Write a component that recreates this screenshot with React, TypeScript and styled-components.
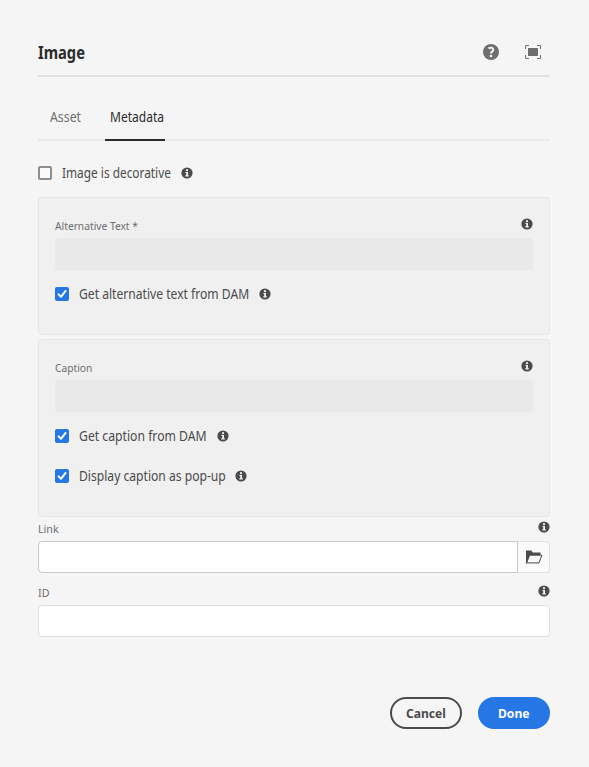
import React from 'react';
import styled, { createGlobalStyle } from 'styled-components';

const GlobalStyle = createGlobalStyle`
  * { box-sizing: border-box; }
  body { margin: 0; background: #f5f5f5; }
`;

const Dialog = styled.main`
  width: 589px;
  height: 767px;
  padding: 28px 39px 0 38px;
  background: #f5f5f5;
  color: #4b4b4b;
  font-family: 'Noto Sans', 'Open Sans', sans-serif;
  font-size: 14px;
  display: flex;
  flex-direction: column;
`;

const Header = styled.header`
  display: flex;
  align-items: center;
  height: 49px;
  padding-top: 1px;
  border-bottom: 2px solid #e1e1e1;
`;

const Title = styled.h1`
  margin: 0 auto 0 0;
  padding-top: 1px;
  font-size: 17px;
  line-height: 24px;
  font-weight: 700;
  color: #2c2c2c;
`;

const HeaderButton = styled.button`
  display: flex;
  margin: 0 9px 0 17px;
  padding: 0;
  border: 0;
  background: none;
  color: #6e6e6e;
`;

const Tabs = styled.nav`
  display: flex;
  gap: 22px;
  height: 48px;
  margin-top: 16px;
  padding-left: 7px;
  border-bottom: 2px solid #eaeaea;
`;

const Tab = styled.button<{ $selected?: boolean }>`
  height: 48px;
  padding: 0 1px 0 5px;
  border: 0;
  border-bottom: 2px solid ${(p) => (p.$selected ? '#2c2c2c' : 'transparent')};
  background: none;
  color: ${(p) => (p.$selected ? '#2c2c2c' : '#6e6e6e')};
  font: inherit;
  line-height: 47px;
`;

/* Squeezes a run of text horizontally and occupies exactly the given width. */
const Run = styled.span<{ $width: number; $scale?: number }>`
  display: block;
  width: ${(p) => p.$width}px;
  white-space: nowrap;
  text-align: left;
  transform: scaleX(${(p) => p.$scale ?? 0.865});
  transform-origin: 0 50%;
`;

const CheckRow = styled.label<{ $top: number }>`
  display: flex;
  align-items: center;
  height: 20px;
  margin-top: ${(p) => p.$top}px;
  line-height: 18px;
`;

const Box = styled.span<{ $checked?: boolean }>`
  display: flex;
  width: 14px;
  height: 14px;
  margin-right: 10px;
  border: ${(p) => (p.$checked ? '0' : '2px solid #8e8e8e')};
  border-radius: 2px;
  background: ${(p) => (p.$checked ? '#2676e5' : '#fafafa')};
`;

const InfoSvg = styled.svg`
  display: block;
  flex: none;
  width: 12px;
  height: 12px;
  color: #4b4b4b;
`;

const CheckInfo = styled.span`
  margin-left: 10px;
`;

const Panel = styled.section<{ $height: number; $top: number }>`
  height: ${(p) => p.$height}px;
  margin-top: ${(p) => p.$top}px;
  padding: 20px 16px 0;
  border: 1px solid #e6e6e6;
  border-radius: 4px;
  background: #f0f0f0;
`;

const FieldHead = styled.div<{ $top?: number }>`
  display: flex;
  justify-content: space-between;
  height: 20px;
  margin-top: ${(p) => p.$top ?? 0}px;
  color: #6e6e6e;
  font-size: 11.5px;
  line-height: 15px;
`;

const DisabledField = styled.div`
  height: 32px;
  border-radius: 4px;
  background: #e9e9e9;
`;

const PathField = styled.div`
  display: flex;
  height: 32px;
`;

const TextInput = styled.input<{ $joined?: boolean }>`
  display: block;
  flex: 1;
  width: 100%;
  height: 32px;
  border: 1px solid ${(p) => (p.$joined ? '#c8c8c8' : '#e1e1e1')};
  border-radius: ${(p) => (p.$joined ? '4px 0 0 4px' : '4px')};
  background: #fff;
  outline: none;
`;

const Browse = styled.button`
  display: flex;
  align-items: center;
  justify-content: center;
  width: 32px;
  padding: 0;
  border: 1px solid #e1e1e1;
  border-left: 0;
  border-radius: 0 4px 4px 0;
  background: #fafafa;
`;

const Footer = styled.footer`
  display: flex;
  justify-content: flex-end;
  gap: 16px;
  margin-top: 60px;
`;

const Action = styled.button<{ $primary?: boolean }>`
  display: flex;
  align-items: center;
  justify-content: center;
  width: 72px;
  height: 32px;
  padding: 0;
  border: 2px solid ${(p) => (p.$primary ? '#2676e5' : '#4b4b4b')};
  border-radius: 16px;
  background: ${(p) => (p.$primary ? '#2676e5' : 'transparent')};
  color: ${(p) => (p.$primary ? '#fff' : '#4b4b4b')};
  font: inherit;
  font-size: 13px;
  font-weight: 700;
`;

const Info = () => (
  <InfoSvg viewBox="0 0 12 12">
    <circle cx="6" cy="6" r="5.6" fill="currentColor" />
    <circle cx="6" cy="3.2" r="1.1" fill="#f0f0f0" />
    <path d="M4.4 5h2.6v3.2h.8v1.2H4.3V8.2h.9V6.1h-.8z" fill="#f0f0f0" />
  </InfoSvg>
);

const Check = ({ text, width, scale, checked, top }: { text: string; width: number; scale?: number; checked?: boolean; top: number }) => (
  <CheckRow $top={top}>
    <Box $checked={checked}>
      {checked && (
        <svg width="14" height="14" viewBox="0 0 14 14">
          <path d="M3.6 7.3 6 9.9l4.6-6" fill="none" stroke="#fff" strokeWidth="1.9" strokeLinecap="round" strokeLinejoin="round" />
        </svg>
      )}
    </Box>
    <Run $width={width} $scale={scale}>{text}</Run>
    <CheckInfo><Info /></CheckInfo>
  </CheckRow>
);

export default function App() {
  return (
    <>
      <GlobalStyle />
      <Dialog>
        <Header>
          <Title><Run $width={47} $scale={0.865}>Image</Run></Title>
          <HeaderButton aria-label="Help">
            <svg width="16" height="16" viewBox="0 0 16 16">
              <circle cx="8" cy="8" r="8" fill="currentColor" />
              <path d="M5.5 4.5C7.4 3.1 10.2 3.7 10.2 5.8c0 1.7-2.2 1.9-2.2 3.7" fill="none" stroke="#f5f5f5" strokeWidth="2.1" />
              <circle cx="8" cy="12" r="1.3" fill="#f5f5f5" />
            </svg>
          </HeaderButton>
          <HeaderButton aria-label="Full screen">
            <svg width="16" height="14" viewBox="0 0 16 14">
              <path d="M3 3h10v8H3z" fill="currentColor" />
              <path d="M.5 4V.5H4M12 .5h3.5V4M15.5 10v3.5H12M4 13.5H.5V10" fill="none" stroke="currentColor" />
            </svg>
          </HeaderButton>
        </Header>
        <Tabs>
          <Tab><Run $width={32} $scale={0.88}>Asset</Run></Tab>
          <Tab $selected><Run $width={54} $scale={0.86}>Metadata</Run></Tab>
        </Tabs>
        <Check text="Image is decorative" width={109} scale={0.847} top={22} />
        <Panel $height={138} $top={14}>
          <FieldHead><Run $width={84} $scale={0.89}>Alternative Text *</Run><Info /></FieldHead>
          <DisabledField />
          <Check text="Get alternative text from DAM" width={170} scale={0.865} checked top={14} />
        </Panel>
        <Panel $height={178} $top={4}>
          <FieldHead><Run $width={38} $scale={0.89}>Caption</Run><Info /></FieldHead>
          <DisabledField />
          <Check text="Get caption from DAM" width={128} scale={0.871} checked top={14} />
          <Check text="Display caption as pop-up" width={146} scale={0.865} checked top={20} />
        </Panel>
        <FieldHead $top={4}><Run $width={22} $scale={0.93}>Link</Run><Info /></FieldHead>
        <PathField>
          <TextInput $joined aria-label="Link" />
          <Browse aria-label="Browse">
            <svg width="18" height="14" viewBox="0 0 18 14">
              <path d="M1 13.5V.5h5.2l1.6 2H15.5v3H4.8L2 13.5z" fill="#4b4b4b" />
              <path d="M4.7 5.2h12.2L14 12.9H1.6z" fill="#fafafa" stroke="#4b4b4b" />
            </svg>
          </Browse>
        </PathField>
        <FieldHead $top={12}><Run $width={11} $scale={0.93}>ID</Run><Info /></FieldHead>
        <PathField><TextInput aria-label="ID" /></PathField>
        <Footer>
          <Action><Run $width={40} $scale={0.93}>Cancel</Run></Action>
          <Action $primary><Run $width={32} $scale={0.93}>Done</Run></Action>
        </Footer>
      </Dialog>
    </>
  );
}
